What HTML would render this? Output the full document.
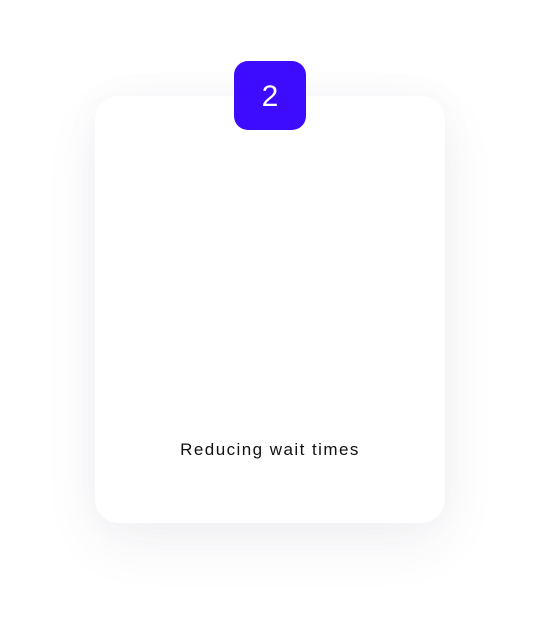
<!DOCTYPE html>
<html><head><style>
html,body{margin:0;padding:0;background:#fff;width:540px;height:620px;overflow:hidden}
.card{position:absolute;left:95px;top:96px;width:350px;height:427px;background:#fff;border-radius:24px;box-shadow:0 20px 60px rgba(30,40,90,0.06),0 0 40px rgba(30,40,90,0.03)}
.badge{position:absolute;left:234px;top:61px;width:72px;height:69px;background:#3d0cff;border-radius:14px;color:#fff;font:30px "Liberation Sans",sans-serif;display:flex;align-items:center;justify-content:center;padding-top:3px;box-sizing:border-box}
.t{position:absolute;left:95px;width:350px;top:440px;text-align:center;font:17px "Liberation Sans",sans-serif;letter-spacing:1.45px;color:#111}
</style></head><body>
<div class="card"></div>
<div class="badge">2</div>
<div class="t">Reducing wait times</div>
</body></html>
